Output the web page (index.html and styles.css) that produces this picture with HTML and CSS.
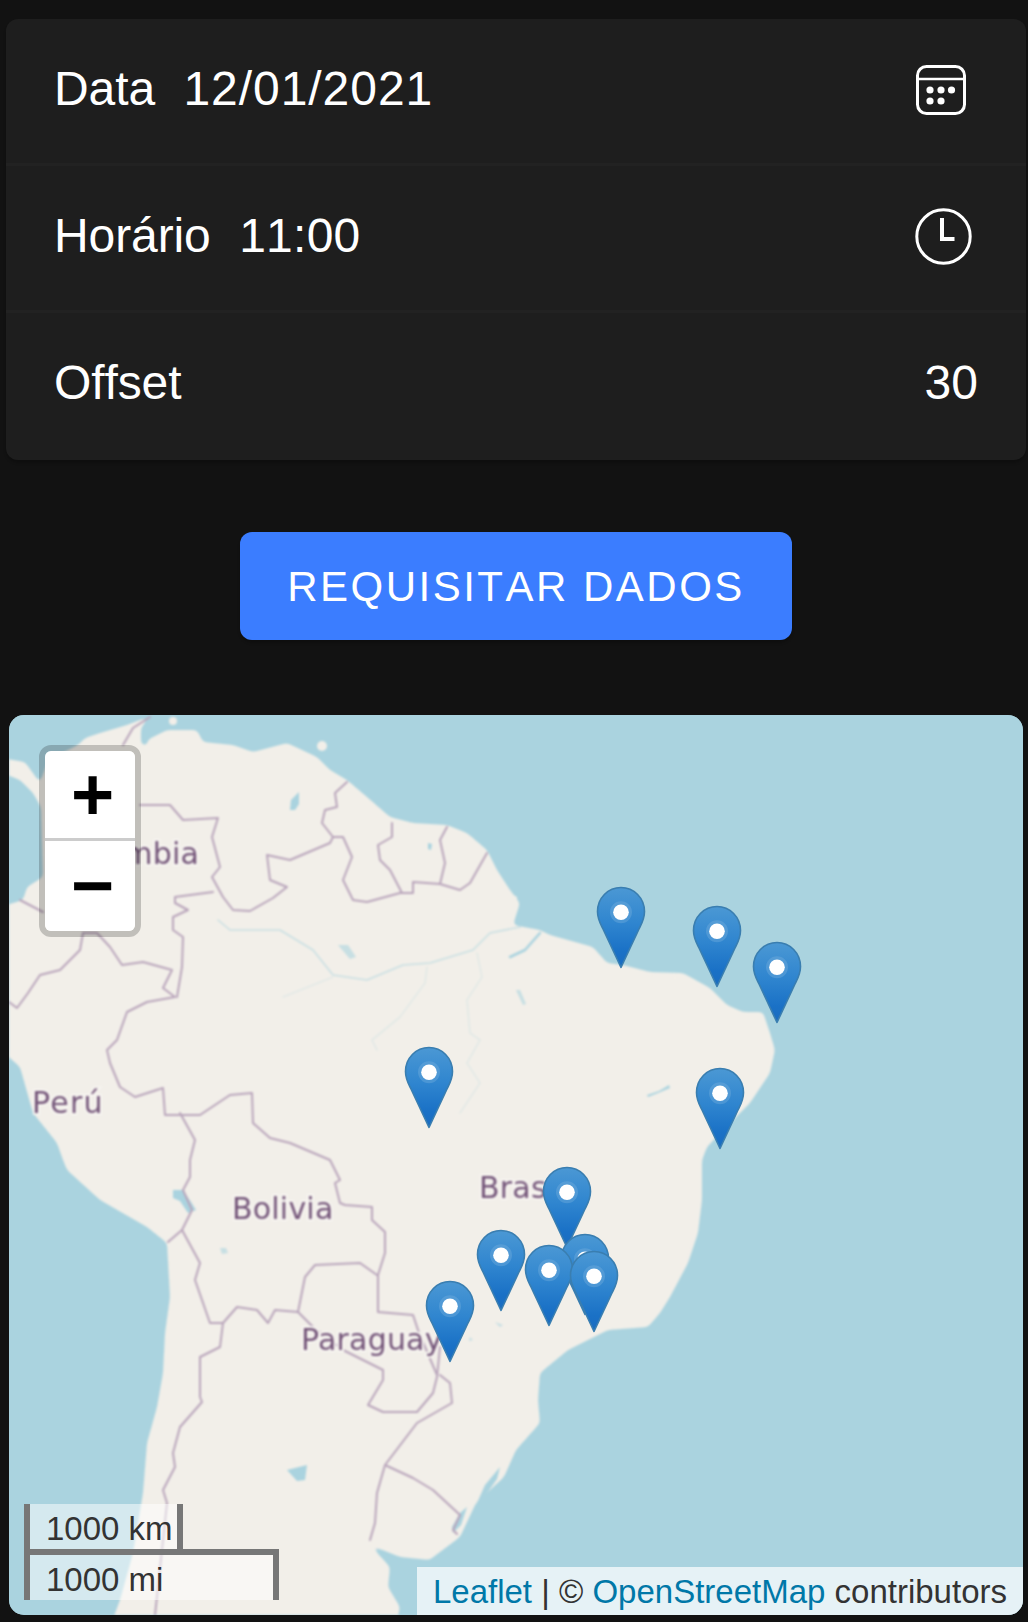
FILE: index.html
```html
<!DOCTYPE html>
<html lang="pt">
<head>
<meta charset="utf-8">
<title>Requisitar dados</title>
<link rel="stylesheet" href="styles.css">
</head>
<body>
<main class="page">
  <section class="card">
    <div class="row">
      <span class="row-text">Data  <span class="val-date">12/01/2021</span></span>
      <svg class="icon-cal" viewBox="0 0 50 50"><rect x="1.5" y="1.5" width="47" height="47" rx="9" fill="none" stroke="#fff" stroke-width="3"/><path d="M2 14h46" stroke="#fff" stroke-width="2.5"/><g fill="#fff"><circle cx="14" cy="25" r="3.6"/><circle cx="25" cy="25" r="3.6"/><circle cx="35.500" cy="25" r="3.600"/><circle cx="14" cy="36" r="3.600"/><circle cx="25" cy="36" r="3.600"/></g></svg>
    </div>
    <div class="row">
      <span class="row-text">Horário  <span class="val-time">11:00</span></span>
      <svg class="icon-clock" viewBox="0 0 57 57"><circle cx="28.500" cy="28.500" r="26.700" fill="none" stroke="#fff" stroke-width="3"/><path d="M27 10v21h12.500" fill="none" stroke="#fff" stroke-width="4"/></svg>
    </div>
    <div class="row row-last">
      <span class="row-text">Offset</span>
      <span class="row-text value">30</span>
    </div>
  </section>

  <div class="action"><button class="btn" type="button">Requisitar dados</button></div>

  <section class="map">
    <svg class="terrain" viewBox="9 715 1014 900" preserveAspectRatio="none">
      <defs>
        <filter id="smooth" filterUnits="userSpaceOnUse" x="-40" y="660" width="1110" height="1010" color-interpolation-filters="sRGB">
          <feGaussianBlur stdDeviation="2.600"/>
          <feComponentTransfer><feFuncA type="linear" slope="6" intercept="-2.500"/></feComponentTransfer>
        </filter>
      </defs>
      <rect x="9" y="715" width="1014" height="900" fill="#aad3df"/>
      <path filter="url(#smooth)" fill="#f2efe9" d="M-10 756 25 762 40 783 48 760 78 745 85 738 100 733 127 725 150 716 141 728 141 745 146 745 155 755 150 768 141 770 148 745 147 740 167 730 197 730 203 742 233 745 253 752 287 743 317 757 330 770 347 780 367 797 390 817 413 823 447 825 467 833 487 850 497 870 510 890 520 903 513 925 540 930 550 935 593 947 607 963 623 965 650 972 683 973 710 988 727 1005 743 1012 763 1012 770 1033 775 1050 770 1073 750 1103 723 1130 707 1147 702 1160 702 1200 698 1233 688 1263 670 1297 660 1313 648 1327 608 1330 568 1350 540 1373 538 1400 540 1423 516 1450 504 1477 476 1503 460 1537 432 1558 430 1560 400 1557 370 1545 390 1567 388 1587 400 1607 393 1640 105 1640 120 1600 133 1553 143 1493 147 1443 157 1407 163 1373 165 1333 170 1297 167 1243 147 1227 100 1200 67 1170 63 1160 57 1143 33 1113 20 1067 -10 1040 -10 910 23 900 27 887 43 877 41 807 33 793 20 780 -10 768Z"/>
      <g fill="#f2efe9" class="islets"><circle cx="173" cy="721" r="4"/><circle cx="322" cy="746" r="5"/><path d="M510 893l7 4 0 12-7 5z"/></g>
      <g fill="#aad3df">
        <path d="M173 1190l10 0 8 12 5 8-8 3-8-12-7-3zM287 1470l20-5-2 15-8 1zM291 800l8-8 0 12-4 6-5 0zM428 843l4 1-1 6-3-1zM647 1095l12-4 10-6 1 3-12 5-10 4zM500 1467l-3 12-14 20-6 4 8-18zM467 1507l-6 18-8 8-1-6 8-14z"/>
        <path opacity=".6" d="M220 1248l6 0 2 5-6 1zM338 945l10 0 8 12-6 2zM516 990l4 0 6 14-3 1zM438 1305l4-5 2 3-4 5zM495 1322l8 3-3 2zM470 1337l3 3-4 1z"/>
      </g>
      <g fill="none" stroke="#aad3df" stroke-linejoin="round" stroke-linecap="round">
        <path stroke-width="2.500" d="M510 957 525 950 540 933"/>
        <path stroke-width="1.600" opacity=".55" d="M218 920 230 930 280 930 313 950 333 975 367 980 403 965 430 963 473 950 490 933 520 927"/>
        <path stroke-width="1.200" opacity=".3" d="M427 967 425 983 400 1017 372 1040 377 1050M477 953 482 977 467 1000 470 1033 480 1040 467 1063 480 1083 460 1113M283 997 333 977"/>
      </g>
      <g fill="none" stroke="#b9a5bb" stroke-width="2" stroke-linejoin="round" stroke-linecap="round">
        <path d="M150 717 133 728 123 745M140 805 170 805 183 820 218 818 212 837 220 867 212 877 223 897 233 910 250 911 273 898 287 887 270 880 267 855 290 860 330 843 333 837 343 837 352 857 343 880 353 900 367 902 400 893 413 893 413 882 440 884 460 890 470 883 487 853"/>
        <path d="M347 782 335 793 337 807 325 810 322 823 333 837M392 823 392 837 378 845 380 860 390 870 402 893M447 827 440 840 445 863 440 884"/>
        <path d="M213 892 175 897 175 903 188 910 173 917 173 930 183 937 182 967 177 997M83 933 97 933 110 947 122 965 143 962 172 970 163 988 175 997 147 1002 127 1012 117 1040 107 1050 110 1063 120 1087 135 1097 163 1088 165 1115 200 1115 230 1095 252 1093 253 1123 270 1138 290 1143 330 1160 340 1180 335 1183 340 1203 345 1205 372 1207 372 1220 385 1232 385 1253 378 1275 378 1312 413 1315 419 1333"/>
        <path d="M83 933 80 950 60 970 40 975 28 993 17 1008 9 1002M20 900 43 912M180 1113 195 1140 190 1160 190 1177 183 1190 192 1210 182 1230 168 1242"/>
        <path d="M182 1230 200 1263 195 1280 210 1323 223 1323 237 1307 257 1310 268 1323 275 1310 298 1312 305 1277 315 1265 360 1263 377 1275M223 1323 220 1347 200 1357 200 1397 202 1402 180 1427 173 1453 175 1467 163 1490 167 1503 155 1615"/>
        <path d="M298 1312 313 1327 343 1350 383 1370 383 1380 368 1405 383 1412 417 1412 433 1393 437 1377 440 1347M419 1333 437 1375M440 1375 450 1383 452 1403 417 1423 385 1465 377 1493 375 1523 370 1540M385 1465 413 1478 433 1490 460 1515 453 1530 457 1534"/>
      </g>
      <g class="map-labels">
        <text x="199" y="864" text-anchor="end">Colombia</text>
        <text x="32" y="1113" class="label-wide">Perú</text>
        <text x="232" y="1219">Bolivia</text>
        <text x="479" y="1198">Brasil</text>
        <text x="301" y="1350">Paraguay</text>
      </g>
    </svg>

    <svg class="markers" viewBox="9 715 1014 900" preserveAspectRatio="none">
      <defs>
        <linearGradient id="pin" x1="0" y1="0" x2="0" y2="1">
          <stop offset="0" stop-color="#4b98d4"/>
          <stop offset=".45" stop-color="#2f85cf"/>
          <stop offset=".8" stop-color="#1a71c6"/>
          <stop offset="1" stop-color="#1a6cc0"/>
        </linearGradient>
        <g id="marker">
          <path d="M0-1.500-18-40C-21-46-23.500-50-23.500-57.500-23.500-71 -13-81.500 0-81.500S23.500-71 23.500-57.500C23.500-50 21-46 18-40Z" fill="url(#pin)" stroke="#3a7eb0" stroke-width="1.600" stroke-linejoin="round"/>
          <circle cy="-56.800" r="11" fill="#7db4e0" opacity=".35"/>
          <circle cy="-56.800" r="7.800" fill="#fff"/>
        </g>
      </defs>
      <use href="#marker" x="621" y="969"/>
      <use href="#marker" x="717" y="988"/>
      <use href="#marker" x="777" y="1024"/>
      <use href="#marker" x="429" y="1129"/>
      <use href="#marker" x="720" y="1150"/>
      <use href="#marker" x="567" y="1249"/>
      <use href="#marker" x="501" y="1312"/>
      <use href="#marker" x="585" y="1316"/>
      <use href="#marker" x="549" y="1327"/>
      <use href="#marker" x="594" y="1333"/>
      <use href="#marker" x="450" y="1363"/>
    </svg>

    <div class="zoom">
      <a class="zoom-btn zoom-in">+</a>
      <a class="zoom-btn zoom-out">−</a>
    </div>

    <div class="scale">
      <div class="scale-line scale-km">1000 km</div>
      <div class="scale-line scale-mi">1000 mi</div>
    </div>

    <div class="attribution"><a>Leaflet</a> | © <a>OpenStreetMap</a> contributors</div>
  </section>
</main>
</body>
</html>
```
FILE: styles.css
```css
* { box-sizing: border-box; }
html, body { margin: 0; background: #121212; }
body { width: 1028px; height: 1622px; overflow: hidden; font-family: "Liberation Sans", Arial, sans-serif; font-kerning: none; color: #fff; }
.page { width: 1020px; margin-left: 6px; padding-top: 19px; }

.card { background: #1e1e1e; border-radius: 12px; box-shadow: 0 3px 3px rgba(0,0,0,.2); }
.row { height: 147px; display: flex; align-items: center; justify-content: space-between; padding: 0 49px 3px 48px; border-bottom: 3px solid #222; }
.row-last { border-bottom: 0; padding-bottom: 6px; }
.row-text { font-size: 48px; letter-spacing: -.1px; white-space: pre; line-height: 72px; margin-bottom: 2px; }
.val-date { letter-spacing: .95px; margin-left: 2px; }
.val-time { letter-spacing: .25px; margin-left: 2px; }
.icon-cal { width: 50px; height: 50px; margin-right: 11px; display: block; }
.icon-clock { width: 57px; height: 57px; margin-right: 5px; display: block; }
.value { margin-right: -1px; letter-spacing: 0; }

.action { display: flex; justify-content: center; margin-top: 72px; }
.btn { height: 108px; padding: 2px 47px 0; border: 0; border-radius: 12px; background: #3b7dff; color: #fff; font: 42px "Liberation Sans", Arial, sans-serif; font-kerning: none; letter-spacing: 2.5px; text-transform: uppercase; box-shadow: 0 3px 3px rgba(0,0,0,.2); }

.map { position: relative; height: 900px; margin: 75px 3px 0; border-radius: 15px; overflow: hidden; background: #aad3df; }
.terrain { display: block; width: 100%; height: 100%; filter: blur(.9px); }
.map-labels text { font: 30px "DejaVu Sans", sans-serif; fill: #735478; stroke: #f7f5f1; stroke-width: 4px; paint-order: stroke; letter-spacing: .2px; }
.map-labels .label-wide { letter-spacing: 1.2px; }
.markers { position: absolute; inset: 0; width: 100%; height: 100%; filter: blur(.5px); }

.zoom { position: absolute; left: 30px; top: 30px; width: 102px; border: 6px solid rgba(0,0,0,.2); border-radius: 12px; background-clip: padding-box; }
.zoom-btn { display: block; width: 90px; height: 90px; background: #fff; color: #000; font: bold 74px/90px "Liberation Sans", sans-serif; text-align: center; text-indent: 5px; }
.zoom-in { line-height: 87px; border-bottom: 3px solid #ccc; border-radius: 6px 6px 0 0; }
.zoom-out { border-radius: 0 0 6px 6px; }

.scale { position: absolute; left: 15px; bottom: 15px; color: #333; font-size: 33px; line-height: 38px; }
.scale-line { height: 51px; padding: 6px 15px 3px 16px; background: rgba(255,255,255,.5); border: 6px solid #777; white-space: nowrap; }
.scale-km { width: 159px; border-top: 0; }
.scale-mi { width: 255px; margin-top: -6px; border-bottom: 0; }

.attribution { position: absolute; right: 0; bottom: 0; height: 48px; padding: 0 16px; font-size: 33px; line-height: 50px; color: #333; background: rgba(255,255,255,.7); white-space: nowrap; }
.attribution a { color: #0078a8; }
```
